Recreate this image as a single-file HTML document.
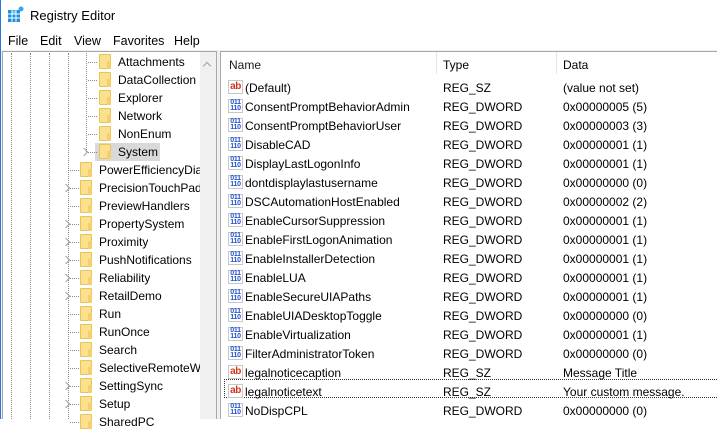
<!DOCTYPE html>
<html><head><meta charset="utf-8"><style>
*{margin:0;padding:0;box-sizing:border-box}
body{width:717px;height:419px;overflow:hidden;background:#fff;font-family:"Liberation Sans",sans-serif;font-size:12px;color:#000;position:relative}
.a{position:absolute;white-space:nowrap}
.vl{position:absolute;width:1px;border-left:1px dotted #8a8a8a}
.hl{position:absolute;height:1px;border-top:1px dotted #8a8a8a}
.f{position:absolute;width:12px;height:15px;background:#fbe08e;border:1px solid #e8c25a;border-radius:1px}
.f:after{content:"";position:absolute;right:-1px;bottom:-1px;width:4px;height:8px;background:#f6cf6b}
.ch{position:absolute;width:6px;height:6px;border-right:1.5px solid #a0a0a0;border-top:1.5px solid #a0a0a0;transform:rotate(45deg)}
.ic{position:absolute;width:15px;height:14px;background:#fff;border:1px solid #c8c8c8;font-size:9px;font-weight:bold;line-height:12px;text-align:center;letter-spacing:-0.5px}
.ab{color:#d03a1a;font-size:10px}
.bn{color:#2050c8;font-size:7px;line-height:6px;padding-top:0;letter-spacing:-0.3px}
</style></head><body>
<div class="a" style="left:0;top:0;width:1px;height:419px;background:#2b79d6"></div>
<svg class="a" style="left:8px;top:6px" width="16" height="16" viewBox="0 0 16 16">
<rect x="0" y="4" width="12" height="12" fill="#1e8fd8"/>
<g stroke="#fff" stroke-width="1"><line x1="4" y1="4" x2="4" y2="16"/><line x1="8" y1="4" x2="8" y2="16"/><line x1="0" y1="8" x2="12" y2="8"/><line x1="0" y1="12" x2="12" y2="12"/></g>
<rect x="4.5" y="4.5" width="3" height="3" fill="#5bc4f5"/>
<circle cx="13" cy="3" r="2.5" fill="#3aa6e8"/>
</svg>
<div class="a" style="left:30px;top:8px;font-size:13px">Registry Editor</div>
<div class="a" style="left:8px;top:34px;font-size:12.5px">File</div>
<div class="a" style="left:40px;top:34px;font-size:12.5px">Edit</div>
<div class="a" style="left:74px;top:34px;font-size:12.5px">View</div>
<div class="a" style="left:113px;top:34px;font-size:12.5px">Favorites</div>
<div class="a" style="left:174px;top:34px;font-size:12.5px">Help</div>
<div class="a" style="left:1px;top:50px;width:716px;height:369px;background:#f0f0f0"></div>
<div class="a" style="left:2px;top:51px;width:215px;height:368px;background:#fff;border:1px solid #a8a8a8;border-bottom:none"></div>
<div class="a" style="left:200px;top:52px;width:16px;height:367px;background:#f0f0f0"></div>
<div class="ch" style="left:204px;top:63px;transform:rotate(-45deg)"></div>
<div class="a" style="left:220px;top:51px;width:497px;height:368px;background:#fff;border:1px solid #a8a8a8;border-right:none;border-bottom:none"></div>
<div class="vl" style="left:11px;top:53px;height:366px"></div>
<div class="vl" style="left:30px;top:53px;height:366px"></div>
<div class="vl" style="left:49px;top:53px;height:366px"></div>
<div class="vl" style="left:68px;top:53px;height:366px"></div>
<div class="vl" style="left:86px;top:53px;height:99px"></div>
<div class="a" style="left:95px;top:143px;width:65px;height:18px;background:#d9d9d9"></div>
<div class="ch" style="left:81px;top:149px"></div>
<div id="tree"></div>
<div class="a" style="left:229px;top:58px;color:#1a1a1a">Name</div>
<div class="a" style="left:443px;top:58px">Type</div>
<div class="a" style="left:563px;top:58px">Data</div>
<div class="a" style="left:436px;top:52px;width:1px;height:22px;background:#e5e5e5"></div>
<div class="a" style="left:556px;top:52px;width:1px;height:22px;background:#e5e5e5"></div>
<div class="a" style="left:224px;top:379px;width:493px;height:19px;border:1px dotted #333;border-right:none"></div>
<div id="list"></div>
<script>
var t=[["Attachments",1,0],["DataCollection",1,0],["Explorer",1,0],["Network",1,0],["NonEnum",1,0],["System",1,0],
["PowerEfficiencyDiagnostics",0,0],["PrecisionTouchPad",0,1],["PreviewHandlers",0,0],["PropertySystem",0,1],["Proximity",0,1],["PushNotifications",0,1],["Reliability",0,1],["RetailDemo",0,1],["Run",0,0],["RunOnce",0,0],["Search",0,0],["SelectiveRemoteWipe",0,0],["SettingSync",0,1],["Setup",0,1],["SharedPC",0,0]];
var h="";t.forEach(function(r,i){var y=53+18*i;var fx=r[1]?99:80;
h+='<div class="hl" style="left:'+(r[1]?88:70)+'px;top:'+(y+9)+'px;width:9px"></div>';
if(r[2])h+='<div class="ch" style="left:63px;top:'+(y+6)+'px"></div>';
h+='<div class="f" style="left:'+fx+'px;top:'+(y+1)+'px"></div>';
h+='<div class="a" style="left:'+(fx+19)+'px;top:'+(y+2)+'px;max-width:'+(200-fx-19)+'px;overflow:hidden">'+r[0]+'</div>';});
document.getElementById("tree").innerHTML=h;
var l=[["(Default)",1,"REG_SZ","(value not set)"],["ConsentPromptBehaviorAdmin",0,"REG_DWORD","0x00000005 (5)"],["ConsentPromptBehaviorUser",0,"REG_DWORD","0x00000003 (3)"],["DisableCAD",0,"REG_DWORD","0x00000001 (1)"],["DisplayLastLogonInfo",0,"REG_DWORD","0x00000001 (1)"],["dontdisplaylastusername",0,"REG_DWORD","0x00000000 (0)"],["DSCAutomationHostEnabled",0,"REG_DWORD","0x00000002 (2)"],["EnableCursorSuppression",0,"REG_DWORD","0x00000001 (1)"],["EnableFirstLogonAnimation",0,"REG_DWORD","0x00000001 (1)"],["EnableInstallerDetection",0,"REG_DWORD","0x00000001 (1)"],["EnableLUA",0,"REG_DWORD","0x00000001 (1)"],["EnableSecureUIAPaths",0,"REG_DWORD","0x00000001 (1)"],["EnableUIADesktopToggle",0,"REG_DWORD","0x00000000 (0)"],["EnableVirtualization",0,"REG_DWORD","0x00000001 (1)"],["FilterAdministratorToken",0,"REG_DWORD","0x00000000 (0)"],["legalnoticecaption",1,"REG_SZ","Message Title"],["legalnoticetext",1,"REG_SZ","Your custom message."],["NoDispCPL",0,"REG_DWORD","0x00000000 (0)"]];
h="";l.forEach(function(r,i){var y=78+19*i;
h+=r[1]?'<div class="ic ab" style="left:228px;top:'+(y+2)+'px">ab</div>':'<div class="ic bn" style="left:228px;top:'+(y+2)+'px">011<br>110</div>';
h+='<div class="a" style="left:245px;top:'+(y+3)+'px">'+r[0]+'</div><div class="a" style="left:443px;top:'+(y+3)+'px">'+r[2]+'</div><div class="a" style="left:563px;top:'+(y+3)+'px">'+r[3]+'</div>';});
document.getElementById("list").innerHTML=h;
</script>
</body></html>
